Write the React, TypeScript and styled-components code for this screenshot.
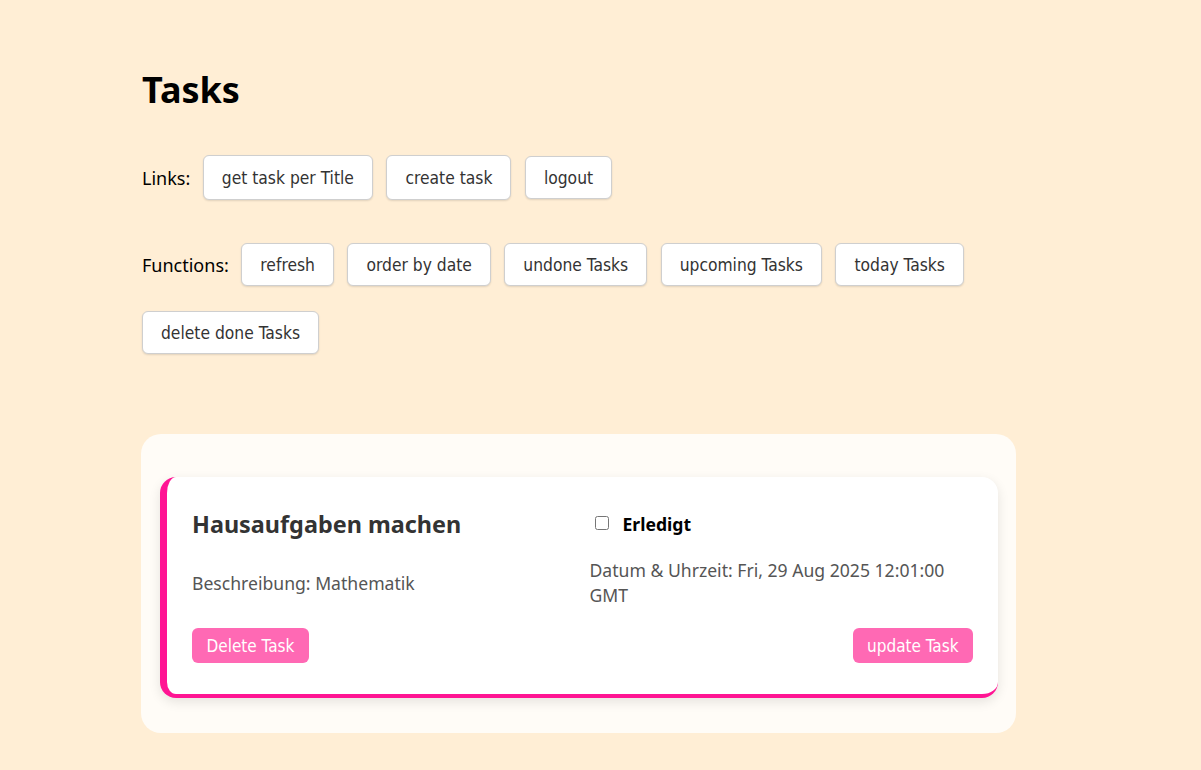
import React, { useState } from 'react';
import styled, { createGlobalStyle } from 'styled-components';

const GlobalStyle = createGlobalStyle`
  html, body {
    margin: 0;
    padding: 0;
    background: #ffeed5;
    font-family: 'Noto Sans', 'Open Sans', sans-serif;
    color: #000;
  }
`;

const Page = styled.div`
  width: 875px;
  margin-left: 141px;
  padding-top: 62px;
  padding-bottom: 36px;
`;

const Title = styled.h1`
  margin: 0 0 37px 1px;
  font-size: 36px;
  font-weight: 700;
  line-height: 56px;
`;

const Row = styled.div<{ $mb: number }>`
  display: flex;
  flex-wrap: wrap;
  align-items: center;
  column-gap: 13.5px;
  row-gap: 25px;
  padding-left: 1px;
  margin-bottom: ${(p) => p.$mb}px;
`;

const Label = styled.span`
  font-size: 18px;
  margin-right: -1px;
`;

const NavButton = styled.button<{ $h?: number }>`
  height: ${(p) => p.$h ?? 43}px;
  padding: 0 18px;
  background: #fff;
  border: 1px solid #cfcfcf;
  border-radius: 6px;
  box-shadow: 0 1px 2px rgba(0, 0, 0, 0.12);
  font-family: 'DejaVu Sans Condensed', 'DejaVu Sans', sans-serif;
  font-size: 17.3px;
  color: #333;
  cursor: pointer;
`;

const Panel = styled.section`
  background: #fffcf7;
  border-radius: 20px;
  padding: 43px 18px 35px 19px;
`;

// title | done, description | date, delete | update
const Card = styled.article`
  background: #fff;
  border-left: 7px solid #ff1493;
  border-bottom: 4px solid #ff1493;
  border-radius: 16px;
  box-shadow: 0 4px 12px rgba(0, 0, 0, 0.1);
  padding: 30px 25px 31px 25px;
  display: grid;
  grid-template-columns: 1fr 1fr;
  grid-template-rows: 34px 17px 50px 20px 35px;
  column-gap: 14px;
  grid-template-areas:
    'title done'
    '. .'
    'desc date'
    '. .'
    'del upd';
`;

const TaskTitle = styled.h2`
  grid-area: title;
  margin: 0;
  font-size: 23.4px;
  font-weight: 700;
  color: #333;
  line-height: 34px;
  align-self: center;
`;

const DoneLabel = styled.label`
  grid-area: done;
  display: flex;
  align-items: center;
  gap: 14px;
  font-size: 17.6px;
  font-weight: 700;
  color: #000;
`;

const Check = styled.input`
  width: 14px;
  height: 14px;
  margin: 0 0 2px 5px;
  accent-color: #ff1493;
`;

const Info = styled.p<{ $area: string; $center?: boolean }>`
  grid-area: ${(p) => p.$area};
  margin: 0;
  font-size: 17.6px;
  line-height: 25px;
  color: #555;
  align-self: ${(p) => (p.$center ? 'center' : 'start')};
`;

const ActionButton = styled.button<{ $area: string; $end?: boolean }>`
  grid-area: ${(p) => p.$area};
  justify-self: ${(p) => (p.$end ? 'end' : 'start')};
  height: 35px;
  padding: 0 14.5px;
  background: #ff69b4;
  color: #fff;
  border: none;
  border-radius: 6px;
  font-family: 'DejaVu Sans Condensed', 'DejaVu Sans', sans-serif;
  font-size: 17px;
  cursor: pointer;
`;

const links = ['get task per Title', 'create task', 'logout'];
const functions = ['refresh', 'order by date', 'undone Tasks', 'upcoming Tasks', 'today Tasks', 'delete done Tasks'];

const App: React.FC = () => {
  const [done, setDone] = useState(false);

  return (
    <>
      <GlobalStyle />
      <Page>
        <Title>Tasks</Title>
        <Row $mb={43}>
          <Label>Links:</Label>
          {links.map((l) => (
            <NavButton key={l} $h={l === 'logout' ? 43 : 45}>
              {l}
            </NavButton>
          ))}
        </Row>
        <Row $mb={80}>
          <Label>Functions:</Label>
          {functions.map((f) => (
            <NavButton key={f}>{f}</NavButton>
          ))}
        </Row>
        <Panel>
          <Card>
            <TaskTitle>Hausaufgaben machen</TaskTitle>
            <DoneLabel>
              <Check type="checkbox" checked={done} onChange={() => setDone(!done)} />
              Erledigt
            </DoneLabel>
            <Info $area="desc" $center>
              Beschreibung: Mathematik
            </Info>
            <Info $area="date">Datum &amp; Uhrzeit: Fri, 29 Aug 2025 12:01:00 GMT</Info>
            <ActionButton $area="del">Delete Task</ActionButton>
            <ActionButton $area="upd" $end>
              update Task
            </ActionButton>
          </Card>
        </Panel>
      </Page>
    </>
  );
};

export default App;
